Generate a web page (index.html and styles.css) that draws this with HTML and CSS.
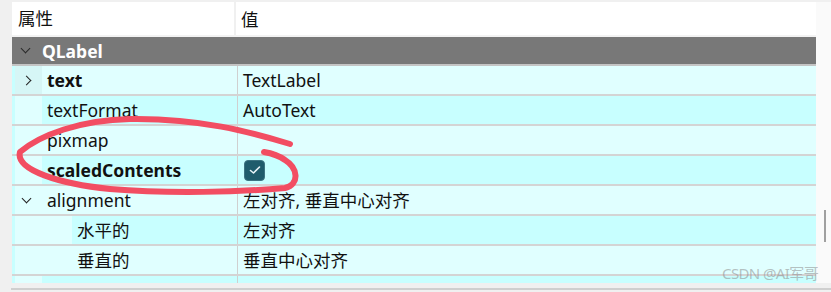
FILE: index.html
```html
<!DOCTYPE html>
<html lang="zh-CN">
<head>
  <meta charset="UTF-8">
  <title>属性编辑器</title>
  <link rel="stylesheet" href="styles.css">
</head>
<body>
  <div class="frame">
    <div class="panel">
      <div class="head">
        <div class="head-name">属性</div>
        <div class="head-value">值</div>
      </div>
      <div class="group">
        <span class="arrow-down"></span>
        <span class="group-name">QLabel</span>
      </div>

      <div class="row light">
        <div class="indent lv1 shade"><span class="arrow-right"></span></div>
        <div class="name bold">text</div>
        <div class="value">TextLabel</div>
      </div>
      <div class="row cyan">
        <div class="indent lv1"></div>
        <div class="name">textFormat</div>
        <div class="value">AutoText</div>
      </div>
      <div class="row light">
        <div class="indent lv1"></div>
        <div class="name">pixmap</div>
        <div class="value"></div>
      </div>
      <div class="row cyan">
        <div class="indent lv1"></div>
        <div class="name bold">scaledContents</div>
        <div class="value"><span class="check on">
          <svg width="14" height="14" viewBox="0 0 14 14"><path d="M2.5 7.5 L5.5 10 L11.5 4" fill="none" stroke="#e8f4f8" stroke-width="1.6" stroke-linecap="round" stroke-linejoin="round"/></svg>
        </span></div>
      </div>
      <div class="row light">
        <div class="indent lv1"><span class="arrow-down"></span></div>
        <div class="name">alignment</div>
        <div class="value">左对齐, 垂直中心对齐</div>
      </div>
      <div class="row cyan">
        <div class="indent lv2"></div>
        <div class="name">水平的</div>
        <div class="value">左对齐</div>
      </div>
      <div class="row light">
        <div class="indent lv2"></div>
        <div class="name">垂直的</div>
        <div class="value">垂直中心对齐</div>
      </div>
      <div class="row cyan cut">
        <div class="indent lv1"></div>
        <div class="name"></div>
        <div class="value"><span class="check off"></span></div>
      </div>
    </div>
    <div class="scroll"><div class="thumb"></div></div>
  </div>

  <!-- hand drawn marker over the screenshot -->
  <svg class="marker" width="831" height="292" viewBox="0 0 831 292">
    <path d="M290 144 C250 132, 200 118, 130 119 C80 120, 40 135, 20 152 C15 170, 60 184, 110 189 C170 194, 240 192, 285 188 C300 184, 298 168, 285 160 C278 155, 270 153, 264 152" fill="none" stroke="#f24d62" stroke-width="6" stroke-linecap="round" stroke-linejoin="round"/>
  </svg>
  <div class="watermark">CSDN @AI军哥</div>
</body>
</html>
```

FILE: styles.css
```css
body {
  margin: 0;
  background: #f0f0f0;
  font-family: "Noto Sans", "Noto Sans CJK SC", sans-serif;
  font-size: 17.5px;
  color: #111;
  width: 831px;
  height: 292px;
  overflow: hidden;
  position: relative;
}
.frame {
  display: flex;
  height: 290px;
  margin-left: 11px;
  padding-top: 2px;
  box-sizing: border-box;
  border-bottom: 2px solid #cfcfcf;
}
.panel {
  margin-left: 1px;
  width: 804px;
  height: 281px;
  overflow: hidden;
  background: #f3f3f3;
}
.head {
  display: flex;
  height: 33px;
  background: #fff;
  align-items: center;
}
.head-name {
  width: 224px;
  box-sizing: border-box;
  padding-left: 6px;
  border-right: 2px solid #f0f0f0;
  height: 33px;
  line-height: 33px;
}
.head-value {
  padding-left: 5px;
}
.group {
  margin-top: 2px;
  height: 27px;
  background: #787878;
  border-bottom: 2px solid #c4c4c4;
  display: flex;
  align-items: center;
}
.group-name {
  margin-left: 13px;
  color: #fff;
  font-weight: bold;
}
.row {
  display: flex;
  height: 28px;
  border-bottom: 2px solid #d4d4d4;
  align-items: stretch;
}
.row.light { background: #e0ffff; }
.row.cyan { background: #c8ffff; }
.indent {
  display: flex;
  align-items: center;
  justify-content: center;
  background: #e0ffff;
  border-left: 3px solid #c8ffff;
  box-sizing: border-box;
}
.indent.shade { background: #d6f6f6; }
.indent.lv1 { width: 30px; }
.indent.lv2 { width: 60px; }
.name {
  flex: 1;
  padding-left: 5px;
  line-height: 28px;
  white-space: nowrap;
}
.bold { font-weight: bold; }
.value {
  width: 573px;
  border-left: 1px solid #d0d0d0;
  padding-left: 5px;
  line-height: 28px;
  display: flex;
  align-items: center;
  white-space: nowrap;
}
.arrow-right, .arrow-down {
  width: 6px;
  height: 6px;
  border-right: 1.5px solid #222;
  border-bottom: 1.5px solid #222;
}
.arrow-right {
  transform: rotate(-45deg);
  margin-left: -4px;
}
.arrow-down {
  transform: rotate(45deg);
  margin-top: -4px;
  margin-left: -4px;
}
.group .arrow-down {
  margin-left: 10px;
  border-color: #2a2a2a;
}
.check {
  width: 21px;
  height: 21px;
  box-sizing: border-box;
  border-radius: 4px;
  display: flex;
  align-items: center;
  justify-content: center;
  margin-left: 1px;
}
.check.on {
  background: #1f5c6c;
  border: 1px solid #3d7482;
}
.check.off {
  border: 1.5px solid #555;
  background: #f4f4f4;
  margin-top: 18px;
}
.row.cut {
  height: 7px;
  border-bottom: none;
  overflow: hidden;
}
.row.cut .value { align-items: flex-start; }
.scroll {
  width: 15px;
  height: 281px;
  background: #fafafa;
  position: relative;
}
.thumb {
  position: absolute;
  left: 8px;
  top: 208px;
  width: 2px;
  height: 32px;
  background: #a0a0a0;
}
.marker {
  position: absolute;
  left: 0;
  top: 0;
  pointer-events: none;
}
.watermark {
  position: absolute;
  left: 722px;
  top: 262px;
  font-size: 15px;
  letter-spacing: -0.6px;
  color: rgba(140, 140, 140, 0.55);
  pointer-events: none;
}
```
